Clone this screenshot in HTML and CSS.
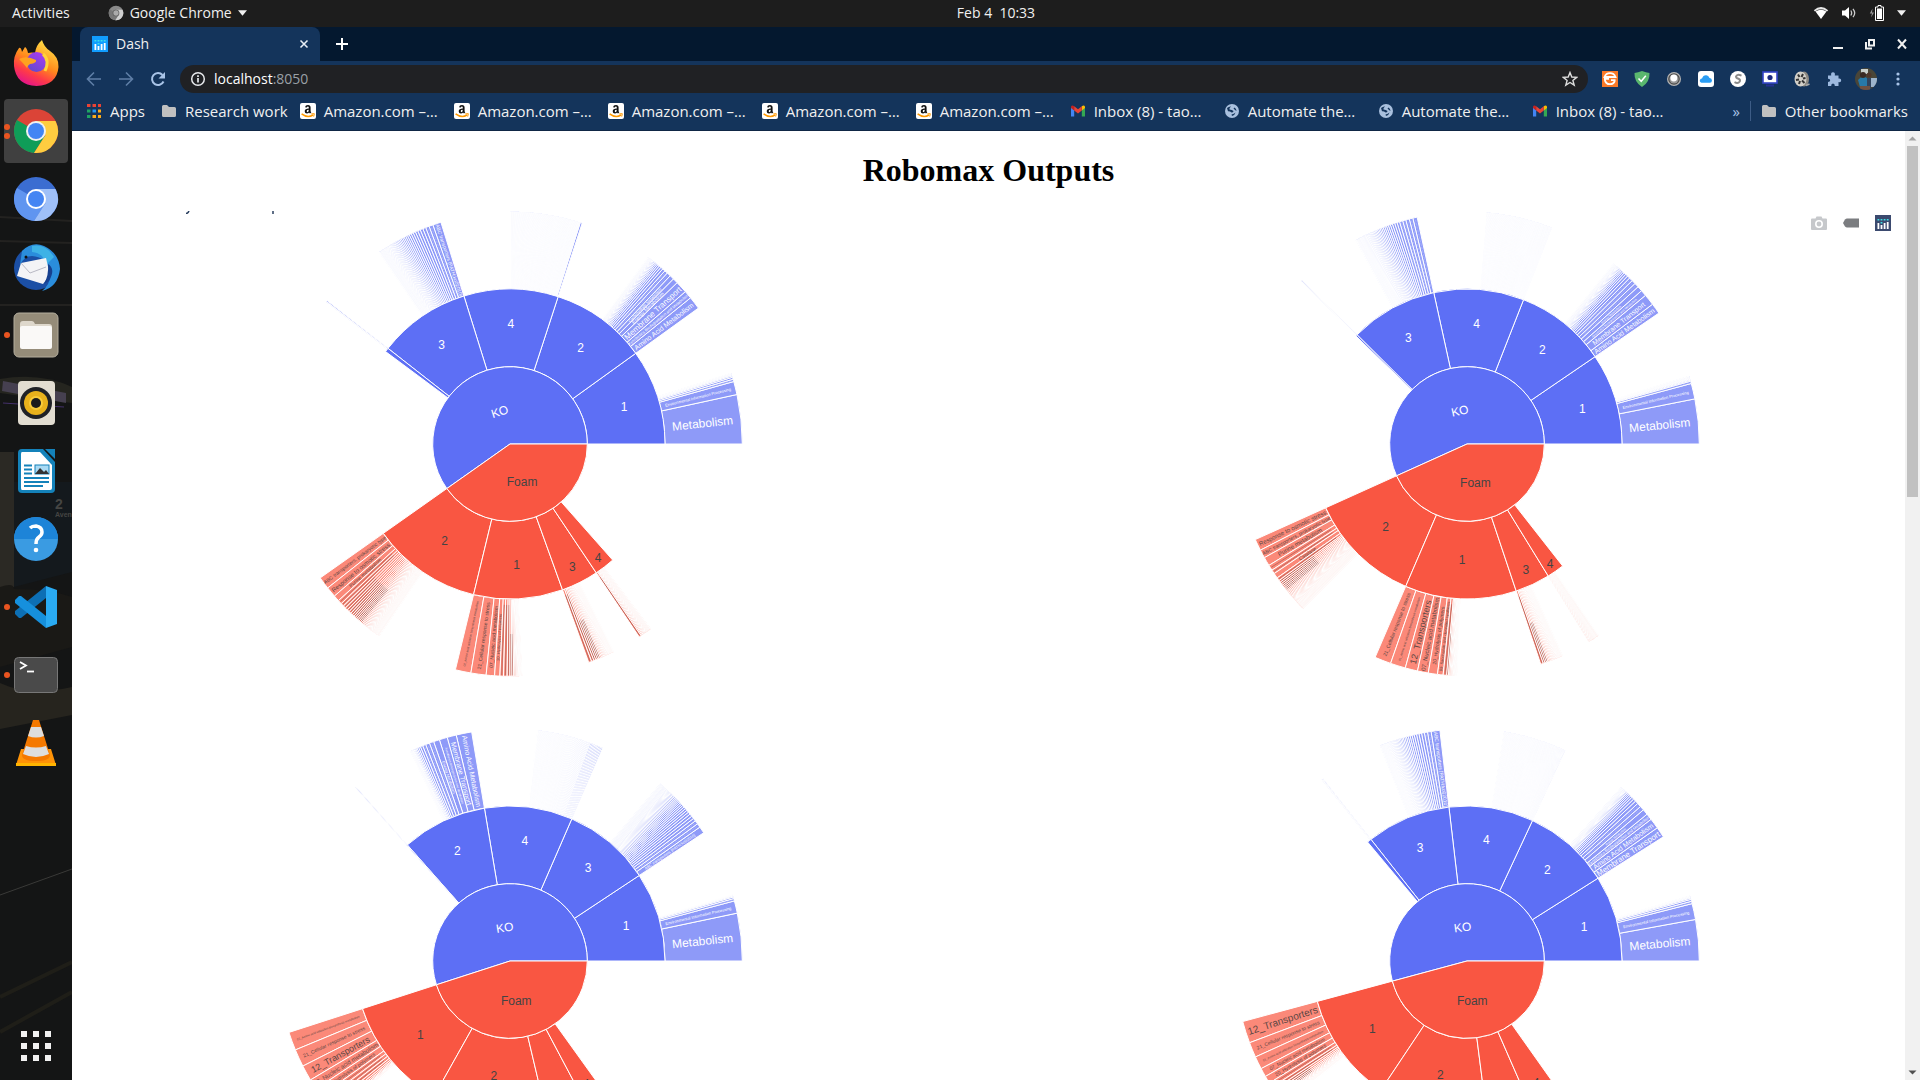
FILE: index.html
```html
<!DOCTYPE html>
<html lang="en">
<head>
<meta charset="utf-8">
<meta name="viewport" content="width=device-width, initial-scale=1">
<title>Dash</title>
<link rel="stylesheet" href="styles.css">
</head>
<body>
<svg class="sprite" aria-hidden="true">
  <symbol id="amazon" viewBox="0 0 16 16"><rect width="16" height="16" rx="2" fill="#fff"/><path d="M5 4.2Q5.4 1.9 8 1.9Q10.6 1.9 10.6 4.4V8Q10.6 8.8 11.3 9.4L10 10.6Q9.3 10 9.1 9.5Q8.2 10.6 6.9 10.6Q4.7 10.4 4.7 8.2Q4.8 5.5 8.8 5.4V4.5Q8.800 3.500 7.900 3.500Q7 3.500 6.800 4.400ZM8.800 6.800Q6.700 6.800 6.700 8.100Q6.700 9.200 7.500 9.200Q8.800 9.100 8.800 6.800Z" fill="#111"/><path d="M1.600 10.800Q7.500 15.300 13 12" fill="none" stroke="#f90" stroke-width="1.500"/><path d="M11.300 10.900L14.300 10.700L13.700 13.600" fill="none" stroke="#f90"/></symbol>
  <symbol id="gmail" viewBox="0 0 16 16"><path d="M1 4V13.500H4.200V7L1 4Z" fill="#4285f4"/><path d="M11.800 7V13.500H15V4Z" fill="#34a853"/><path d="M1 3.500Q2 1.800 4.200 3.200V7.400L1 5Z" fill="#c5221f"/><path d="M15 3.500Q14 1.800 11.800 3.200V7.400L15 5Z" fill="#fbbc04"/><path d="M4.200 3.200L8 6.200L11.800 3.200V7.400L8 10.400L4.200 7.400Z" fill="#ea4335"/></symbol>
  <symbol id="globe" viewBox="0 0 16 16"><circle cx="8" cy="8" r="7" fill="#a9c0de"/><path d="M3 5Q5.500 3 7 3.500Q5 5 5.500 6.500Q8 6.500 9.500 8Q9.500 9.500 7.500 9.500Q6 8 4 8.200ZM10.500 4.500Q12.500 5.500 12.500 8Q11 7 9.500 5.500ZM7.500 11.500Q10 11 11.500 9.500Q11 12 8 13Z" fill="#14345b"/></symbol>
  <symbol id="folder" viewBox="0 0 16 16"><path d="M1 3.500Q1 2 2.500 2H6L8 4H13.500Q15 4 15 5.500V12.500Q15 14 13.500 14H2.500Q1 14 1 12.500Z" fill="#c0c0c0"/></symbol>
  <symbol id="bars" viewBox="0 0 16 16"><path d="M2.500 8h1.800v6H2.500zM5.600 10h1.800v4H5.600zM8.700 8h1.800v6H8.700zM11.800 7h1.800v7h-1.800z" fill="#fff"/><path d="M2.500 4h1.800v1.500H2.500zM5.600 4h1.800v1.500H5.600zM8.700 4h1.800v1.500H8.700zM11.800 4h1.800v1.500h-1.800zM5.600 7h1.800v1.500H5.600z" fill="#3fe0e6"/></symbol>
  <symbol id="chrome" viewBox="0 0 48 48"><circle cx="24" cy="24" r="22" fill="var(--c1)"/><path d="M24 24L5 13A22 22 0 0 0 22 46L33 29Z" fill="var(--c2)"/><path d="M24 14H43.500A22 22 0 0 1 22 46L33.500 28Z" fill="var(--c3)"/><circle cx="24" cy="24" r="10" fill="var(--c4)"/><circle cx="24" cy="24" r="8" fill="var(--c5)"/></symbol>
</svg>

<header class="topbar">
  <div class="topbar-left">
    <button class="top-btn" type="button">Activities</button>
    <button class="top-btn app-menu" type="button"><svg class="ico16 chrome-grey"><use href="#chrome"/></svg>Google Chrome<svg class="caret" viewBox="0 0 10 6"><path d="M0 0H10L5 6Z"/></svg></button>
  </div>
  <button class="top-btn clock" type="button">Feb 4&nbsp; 10:33</button>
  <div class="topbar-right">
    <svg class="ico16" viewBox="0 0 16 16"><path d="M.8 5.200Q8 -1 15.200 5.200L14 6.600Q8 1.800 2 6.600Z" fill="#e8e8e8"/><path d="M2.500 6.500Q8 2.800 13.500 6.500L8 14Z" fill="#fff"/></svg>
    <svg class="ico16" viewBox="0 0 16 16"><path d="M1 5.500H4L8 2V14L4 10.500H1Z" fill="#fff"/><path d="M9.800 5.500Q11.500 8 9.800 10.500M12 3.800Q15.400 8 12 12.200" fill="none" stroke="#ccc" stroke-width="1.300"/></svg>
    <svg class="ico16" viewBox="0 0 16 16"><path d="M3.500 3.500L.8 8.500H3L2 12.500L5 7.500H3Z" fill="#999"/><path d="M9 .5h3V2h2.500V15.500H6.500V2H9Z" fill="none" stroke="#fff"/><rect x="8" y="3.500" width="5" height="10.500" fill="#fff"/></svg>
    <svg class="caret" viewBox="0 0 10 6"><path d="M0 0H10L5 6Z"/></svg>
  </div>
</header>

<div class="desktop">
  <nav class="dock" aria-label="Dock">
    <svg class="dock-bg" viewBox="0 0 72 1053" preserveAspectRatio="none" aria-hidden="true"><rect width="72" height="1053" fill="#141515"/><path d="M0 190L72 194M0 214L72 216M0 278H72" stroke="#232220" stroke-width="2"/><path d="M0 352Q40 345 72 360V376L0 366Z" fill="#25251f"/><path d="M3 354L66 366V376L2 364Z" fill="#464050"/><path d="M3 376L64 380" stroke="#43306a"/><path d="M0 425H14V560H0Z" fill="#2b2924"/><path d="M14 455H72V545L14 560Z" fill="#14191d"/><path d="M0 560Q14 555 14 562Q50 562 72 570V620L0 640Z" fill="#1a1916"/><path d="M0 656Q30 670 72 660V688L0 702Z" fill="#26241e"/><path d="M0 868L72 842" stroke="#3a3a38"/><path d="M0 970L72 935M0 1005L72 965" stroke="#1f1e18" stroke-width="4"/></svg>
    <span class="dock-sign">2<small>Aven</small></span>
    <button class="dock-item" type="button" aria-label="Firefox"><svg viewBox="0 0 48 48"><defs><linearGradient id="ff" x1=".8" y1="0" x2=".3" y2="1"><stop offset="0" stop-color="#ffe94a"/><stop offset=".5" stop-color="#ff8a1c"/><stop offset=".75" stop-color="#ff3b47"/><stop offset="1" stop-color="#e3128e"/></linearGradient><linearGradient id="fp" x1="0" y1="1" x2=".6" y2="0"><stop offset="0" stop-color="#5a4bc8"/><stop offset="1" stop-color="#a43cf0"/></linearGradient></defs><path d="M7 9Q9 8 10 13L13 8Q15 9 16 14Q20 13 23 14Q24 6 30 1Q32 8 38 12Q47 18 46.500 28Q45 46 24.500 47Q4 46 2 27Q1 17 7 9Z" fill="url(#ff)"/><circle cx="24.500" cy="23" r="10" fill="url(#fp)"/><path d="M7 20Q14 16 24 21Q25 24 18 25Q16 26 15 29Q12 25 7 20Z" fill="#ffa21f"/><path d="M31 15Q38 21 33 32" fill="none" stroke="#ffd238" stroke-width="3"/></svg></button>
    <button class="dock-item active two" type="button" aria-label="Google Chrome"><svg class="chrome-colour"><use href="#chrome"/></svg></button>
    <button class="dock-item" type="button" aria-label="Chromium"><svg class="chromium"><use href="#chrome"/></svg></button>
    <button class="dock-item" type="button" aria-label="Thunderbird"><svg viewBox="0 0 48 48"><circle cx="24" cy="25" r="22" fill="#1b4fa5"/><path d="M10 8Q20 -2 32 3Q47 10 48 26Q46 44 30 48Q42 38 36 26Q34 14 20 13Q12 13 8 22Z" fill="#2a8ddc"/><path d="M20 3Q34 0 42 14L34 22Q32 10 20 9Z" fill="#3eb2e6"/><path d="M9 20L34 15L38 32L31 41L5 33Z" fill="#f4f4f6"/><path d="M9 20L18 30L34 24" fill="none" stroke="#b9b9c4"/><path d="M36 21Q44 26 37 38L32 41Q37 32 36 21Z" fill="#16408f"/><circle cx="14" cy="14" r="1.500" fill="#111"/></svg></button>
    <button class="dock-item one" type="button" aria-label="Files"><svg viewBox="0 0 48 48"><rect x="2" y="2" width="44" height="44" rx="5" fill="#958c79" stroke="#b3ad9d"/><path d="M8 13Q8 10 11 10H20Q22 10 23 13H37Q40 13 40 16V34Q40 37 37 37H11Q8 37 8 34Z" fill="#ded8cc"/><rect x="8" y="15" width="32" height="23" rx="2" fill="#faf9f7"/></svg></button>
    <button class="dock-item" type="button" aria-label="Rhythmbox"><svg viewBox="0 0 48 48"><rect x="6" y="2" width="37" height="44" rx="4" fill="#e2ddd1"/><circle cx="24" cy="24" r="16" fill="#1f2126"/><circle cx="24" cy="24" r="12" fill="#e8b11c"/><circle cx="24" cy="24" r="7" fill="#f8cb3b"/><circle cx="24" cy="24" r="5" fill="#1c1c1c"/></svg></button>
    <button class="dock-item" type="button" aria-label="LibreOffice Writer"><svg viewBox="0 0 48 48"><path d="M10 2H31L43 15V42Q43 46 39 46H10Q6 46 6 42V6Q6 2 10 2Z" fill="#1482ba"/><path d="M33 2H43V12Z" fill="#1482ba"/><path d="M10 5H28L40 18V41Q40 43 38 43H10Q9 43 9 41V7Q9 5 10 5Z" fill="#fff"/><rect x="23" y="18" width="14" height="9" fill="#a9daf4" stroke="#1482ba"/><path d="M23 27L28 21L32 25L34 23L37 27Z" fill="#333"/><path d="M12 18.500H20M12 22.500H20M12 26.500H20M12 31H37M12 35H37M12 39H31" stroke="#1482ba" stroke-width="1.800"/></svg></button>
    <button class="dock-item" type="button" aria-label="Help"><svg viewBox="0 0 48 48"><circle cx="24" cy="24" r="22" fill="#3a9be2"/><path d="M2 24A22 22 0 0 1 46 24Z" fill="#1d84d8"/><path d="M18 13Q20 11 24 11Q30 12 30 17Q30 20 27 22Q24 24 24 29" fill="none" stroke="#fff" stroke-width="3.500"/><circle cx="24" cy="35" r="2.300" fill="#fff"/></svg></button>
    <button class="dock-item one" type="button" aria-label="Visual Studio Code"><svg viewBox="0 0 48 48"><path d="M34 3V15L9 35L7 35L3 31V28Z" fill="#0d6fb4"/><path d="M34 45V33L9 13H7L3 17V20Z" fill="#1690dd"/><path d="M34 3L45 7V41L34 45Z" fill="#2aabf3"/></svg></button>
    <button class="dock-item one" type="button" aria-label="Terminal"><svg viewBox="0 0 48 48"><rect x="2.500" y="6.500" width="43" height="35" rx="4" fill="#4a4a4a" stroke="#777"/><path d="M8 11L14 14.500L8 18" fill="none" stroke="#fff" stroke-width="1.800"/><path d="M15 20.500H22" stroke="#fff" stroke-width="1.800"/></svg></button>
    <button class="dock-item" type="button" aria-label="VLC"><svg viewBox="0 0 48 48"><path d="M9 30H39L44 46H4Z" fill="#ff9307"/><path d="M4 44H44V47H4Z" fill="#ffb400"/><path d="M21 1H27L38 36Q38 42 24 42Q10 42 10 36Z" fill="#f57900"/><path d="M19 8H29L32 17Q24 20 16 17ZM14 27Q24 30 34 27L37 35Q24 41 11 35Z" fill="#dedede"/></svg></button>
    <button class="dock-item apps-grid" type="button" aria-label="Show applications"><svg viewBox="0 0 48 48"><path d="M9 9h6v6H9zM21 9h6v6h-6zM33 9h6v6h-6zM9 21h6v6H9zM21 21h6v6h-6zM33 21h6v6h-6zM9 33h6v6H9zM21 33h6v6h-6zM33 33h6v6h-6z" fill="#f2f2f2"/></svg></button>
  </nav>

  <section class="browser">
    <div class="tabstrip">
      <div class="tab"><svg class="ico16 dash-icon"><use href="#bars"/></svg><span class="tab-title">Dash</span><button class="icon-btn tab-close" type="button" aria-label="Close tab"><svg viewBox="0 0 16 16"><path d="M4 4L12 12M12 4L4 12" stroke="#e8eef5" stroke-width="1.800"/></svg></button></div>
      <button class="icon-btn new-tab" type="button" aria-label="New tab"><svg viewBox="0 0 16 16"><path d="M8 2V14M2 8H14" stroke="#fff" stroke-width="2"/></svg></button>
      <div class="window-btns">
        <button class="icon-btn" type="button" aria-label="Minimize"><svg viewBox="0 0 16 16"><path d="M3 12H13" stroke="#f0f0f0" stroke-width="2"/></svg></button>
        <button class="icon-btn" type="button" aria-label="Restore"><svg viewBox="0 0 16 16"><path d="M7 4H12V9.500H7ZM4 6V12.500H10" fill="none" stroke="#f0f0f0" stroke-width="2"/></svg></button>
        <button class="icon-btn" type="button" aria-label="Close"><svg viewBox="0 0 16 16"><path d="M4 3.500L12 12.500M12 3.500L4 12.500" stroke="#f0f0f0" stroke-width="2"/></svg></button>
      </div>
    </div>

    <div class="toolbar">
      <button class="icon-btn" type="button" aria-label="Back"><svg viewBox="0 0 16 16"><path d="M15 8H2M8 1.500L1.500 8L8 14.500" fill="none" stroke="#5f7ea6" stroke-width="1.600"/></svg></button>
      <button class="icon-btn" type="button" aria-label="Forward"><svg viewBox="0 0 16 16"><path d="M1 8H14M8 1.500L14.500 8L8 14.500" fill="none" stroke="#5f7ea6" stroke-width="1.600"/></svg></button>
      <button class="icon-btn" type="button" aria-label="Reload"><svg viewBox="0 0 16 16"><path d="M13.500 10.500A6 6 0 1 1 12.500 4" fill="none" stroke="#a9c4e8" stroke-width="2"/><path d="M15 1V7.500H8.500Z" fill="#a9c4e8"/></svg></button>
      <div class="omnibox">
        <svg class="ico16" viewBox="0 0 16 16"><circle cx="8" cy="8" r="6.300" fill="none" stroke="#e8eaed" stroke-width="1.500"/><path d="M8 7V11.500M8 4.300V6" stroke="#e8eaed" stroke-width="1.700"/></svg>
        <span class="url" role="textbox" aria-label="Address" contenteditable="true" spellcheck="false">localhost<span class="port">:8050</span></span>
        <svg class="ico16" viewBox="0 0 16 16"><path d="M8 1.500L9.800 6L14.700 6.300L10.900 9.400L12.200 14.200L8 11.500L3.800 14.200L5.100 9.400L1.300 6.300L6.200 6Z" fill="none" stroke="#ddd" stroke-width="1.400"/></svg>
      </div>
      <div class="extensions">
        <button class="icon-btn" type="button" aria-label="G extension"><svg viewBox="0 0 16 16"><rect width="16" height="16" fill="#fb7a28"/><path d="M2.500 6Q4 2.200 8 2.200Q12 2.200 13.500 6ZM2 7.800H7M13.500 9.200H9M2.800 8.500Q3.500 13.200 8 13.200Q12 13.200 12.800 9.500" fill="none" stroke="#fff" stroke-width="1.800"/></svg></button>
        <button class="icon-btn" type="button" aria-label="AdGuard"><svg viewBox="0 0 16 16"><path d="M8 0Q12 1.500 15.500 2Q16 11 8 16Q0 11 .5 2Q4 1.500 8 0Z" fill="#5ab76e"/><path d="M4.500 7.500L7.200 10.300L11.800 4.800" fill="none" stroke="#fff" stroke-width="1.500"/></svg></button>
        <button class="icon-btn" type="button" aria-label="Lens extension"><svg viewBox="0 0 16 16"><circle cx="8" cy="8" r="7" fill="#b4b4b4"/><circle cx="8" cy="8" r="5.800" fill="#4a4a4a"/><circle cx="8" cy="8" r="4.600" fill="#999"/><circle cx="7.800" cy="7" r="3.400" fill="#fff"/></svg></button>
        <button class="icon-btn" type="button" aria-label="iCloud"><svg viewBox="0 0 16 16"><rect width="16" height="16" rx="3" fill="#fff"/><path d="M3.500 11.800Q1.200 11 2 8.800Q2.800 7.500 4 7.600Q5 4 8.300 4.200Q10.700 4.600 11.300 6.800Q14 7.200 14 9.500Q13.800 11.800 12 11.800Z" fill="#2a9df4"/></svg></button>
        <button class="icon-btn" type="button" aria-label="S extension"><svg viewBox="0 0 16 16"><circle cx="8" cy="8" r="8" fill="#fff"/><path d="M11.500 4.700Q7 2.700 6 5.500Q6 7 8.500 7.800Q10.500 8.500 9.800 10.500Q8 13 4.500 11.200" fill="none" stroke="#8b8b8b" stroke-width="2"/></svg></button>
        <button class="icon-btn" type="button" aria-label="Screen recorder"><svg viewBox="0 0 16 16"><rect x="1" y="1" width="14" height="11" fill="#fff" stroke="#3545c8" stroke-width="1.600"/><circle cx="8" cy="6.500" r="2.600" fill="#1c2a80"/><path d="M4 14.500H12" stroke="#252f94" stroke-width="2"/></svg></button>
        <button class="icon-btn" type="button" aria-label="Video extension"><svg viewBox="0 0 16 16"><ellipse cx="10" cy="8" rx="5" ry="7.500" fill="#8c8881"/><ellipse cx="6.500" cy="8" rx="6" ry="7.500" fill="#d2cfc8"/><path d="M4 3.500L5.500 6M9 3L7.500 6M2 9L5 8.500M5 13L6 10M10.500 12L8 9.500M11.500 7L9 7.500" stroke="#333" stroke-width="2"/><path d="M12 14.500L15.500 13" stroke="#aaa" stroke-width="1.500"/></svg></button>
        <button class="icon-btn" type="button" aria-label="Extensions"><svg viewBox="0 0 16 16"><path d="M2 4.500H5.200Q4.600 1.200 7 1.200Q9.400 1.200 8.800 4.500H12.500V7.500Q15.200 7 15.200 9.300Q15.200 11.700 12.500 11.100V15H8.800Q9 12.500 7 12.500Q5 12.500 5.200 15H2V11Q4.300 11 4.200 9.300Q4.300 7.600 2 7.700Z" fill="#9db9df"/></svg></button>
        <button class="icon-btn avatar" type="button" aria-label="Profile"><svg viewBox="0 0 22 22"><defs><clipPath id="av"><circle cx="11" cy="11" r="11"/></clipPath></defs><g clip-path="url(#av)"><rect width="22" height="22" fill="#4a4638"/><rect x="6" y="1" width="7" height="5" fill="#c9cfcb"/><rect x="15" y="10" width="7" height="9" fill="#9db4cc"/><path d="M3 12Q8 6 13 11V19H5Z" fill="#2779a8"/><circle cx="8" cy="7" r="3" fill="#3a2a24"/><circle cx="14" cy="7" r="2.500" fill="#50372b"/><path d="M12 10H16V22H12Z" fill="#31445e"/><path d="M5 18H15V22H5Z" fill="#6e5142"/></g></svg></button>
        <button class="icon-btn" type="button" aria-label="Menu"><svg viewBox="0 0 16 16"><circle cx="8" cy="3" r="1.600" fill="#a9c4e8"/><circle cx="8" cy="8" r="1.600" fill="#a9c4e8"/><circle cx="8" cy="13" r="1.600" fill="#a9c4e8"/></svg></button>
      </div>
    </div>

    <nav class="bookmarks" aria-label="Bookmarks">
      <a class="bm apps" href="#"><svg class="ico16" viewBox="0 0 16 16"><path d="M1 1h3.500v3H1zM6.500 1H10v3H6.500zM12 1h3v3h-3z" fill="#ea4335"/><path d="M1 6.500h3.500v3H1z" fill="#1fa463"/><path d="M6.500 6.500H10v3H6.500z" fill="#2196f3"/><path d="M12 6.500h3v3h-3zM6.500 12H10v3H6.500zM12 12h3v3h-3z" fill="#fbab1a"/><path d="M1 12h3.500v3H1z" fill="#1fa463"/></svg>Apps</a>
      <a class="bm research" href="#"><svg class="ico16"><use href="#folder"/></svg>Research work</a>
      <a class="bm site" href="#"><svg class="ico16"><use href="#amazon"/></svg>Amazon.com –…</a>
      <a class="bm site" href="#"><svg class="ico16"><use href="#amazon"/></svg>Amazon.com –…</a>
      <a class="bm site" href="#"><svg class="ico16"><use href="#amazon"/></svg>Amazon.com –…</a>
      <a class="bm site" href="#"><svg class="ico16"><use href="#amazon"/></svg>Amazon.com –…</a>
      <a class="bm site" href="#"><svg class="ico16"><use href="#amazon"/></svg>Amazon.com –…</a>
      <a class="bm site" href="#"><svg class="ico16"><use href="#gmail"/></svg>Inbox (8) - tao…</a>
      <a class="bm site" href="#"><svg class="ico16"><use href="#globe"/></svg>Automate the…</a>
      <a class="bm site" href="#"><svg class="ico16"><use href="#globe"/></svg>Automate the…</a>
      <a class="bm site" href="#"><svg class="ico16"><use href="#gmail"/></svg>Inbox (8) - tao…</a>
      <div class="bm-end">
        <button class="more" type="button" aria-label="More bookmarks">»</button>
        <a class="bm other" href="#"><svg class="ico16"><use href="#folder"/></svg>Other bookmarks</a>
      </div>
    </nav>

    <div class="viewport">
      <main class="page">
        <h1>Robomax Outputs</h1>
        <div class="graph">
          <svg class="title-edge" viewBox="0 0 90 3" aria-hidden="true"><path d="M1 2.500Q3 2.500 4 0M88 0V3" fill="none" stroke="#2a3f5f" stroke-width="1.500"/></svg>
          <div class="charts" id="charts"></div>
          <div class="modebar">
            <button class="icon-btn" type="button" aria-label="Download plot as a png"><svg viewBox="0 0 16 16"><path d="M1 3.500H4.500L5.500 1.500H10.500L11.500 3.500H15Q16 3.500 16 4.500V14Q16 15 15 15H1Q0 15 0 14V4.500Q0 3.500 1 3.500Z" fill="#c6c8cb"/><circle cx="8" cy="9" r="3.200" fill="none" stroke="#fff" stroke-width="1.600"/></svg></button>
            <button class="icon-btn" type="button" aria-label="Toggle hover labels"><svg viewBox="0 0 16 16"><path d="M0 8L2 4.500Q3 3.500 4 3.500H16V12.500H4Q3 12.500 2 11.500Z" fill="#7b7d80"/></svg></button>
            <button class="icon-btn plotly" type="button" aria-label="Produced with Plotly"><svg><use href="#bars"/></svg></button>
          </div>
        </div>
      </main>
      <div class="scrollbar" aria-hidden="true"><svg viewBox="0 0 15 15"><path d="M3.500 9.500H11.500L7.500 5.500Z" fill="#a3a3a3"/></svg><div class="thumb"></div><svg viewBox="0 0 15 15"><path d="M3.500 5.500H11.500L7.500 9.500Z" fill="#505050"/></svg></div>
    </div>
  </section>
</div>
<script src="charts.js"></script>
</body>
</html>
```

FILE: styles.css
```css
* { box-sizing: border-box; }

body {
  margin: 0;
  height: 100vh;
  display: flex;
  flex-direction: column;
  overflow: hidden;
  background: #141515;
  font-family: "Open Sans", "Noto Sans", sans-serif;
  font-size: 14px;
  color: #f0f0f0;
}

button {
  padding: 0;
  border: 0;
  background: none;
  color: inherit;
  font: inherit;
}

a { color: inherit; text-decoration: none; }
svg { display: block; flex: none; }
.sprite { position: absolute; width: 0; height: 0; }
.ico16 { width: 16px; height: 16px; }
.caret { width: 9px; height: 6px; fill: #f0f0f0; }

/* GNOME top bar; the clock is centred over the area beside the dock */
.topbar {
  flex: none;
  height: 27px;
  display: grid;
  grid-template-columns: 74px 1fr auto 1fr;
  align-items: center;
  padding: 0 14px 2px 12px;
  background: #1d1d1d;
}
.topbar-left { grid-column: 1 / 3; display: flex; gap: 38px; }
.topbar-right { display: flex; justify-content: flex-end; align-items: center; gap: 12px; }
.app-menu { display: flex; align-items: center; gap: 6px; }
.chrome-grey { --c1: #8a8a8a; --c2: #777; --c3: #d0d0d0; --c4: #555; --c5: #aaa; }

.desktop { flex: 1; min-height: 0; display: flex; }

/* Dock */
.dock {
  position: relative;
  flex: none;
  width: 72px;
  padding: 4px 4px 2px;
  display: flex;
  flex-direction: column;
  gap: 4px;
}
.dock-bg { position: absolute; inset: 0; width: 100%; height: 100%; }
.dock-sign {
  position: absolute;
  left: 55px;
  top: 470px;
  width: 17px;
  overflow: hidden;
  color: #454543;
  font: bold 14px/14px "Liberation Sans", sans-serif;
}
.dock-sign small { display: block; font-size: 7px; line-height: 8px; }
.dock-item {
  position: relative;
  flex: none;
  width: 64px;
  height: 64px;
  display: grid;
  place-items: center;
  border-radius: 4px;
}
.dock-item svg { width: 48px; height: 48px; }
.dock-item.active { background: #404040; }
.dock-item.one::before,
.dock-item.two::before,
.dock-item.two::after {
  content: "";
  position: absolute;
  left: 0;
  top: 29px;
  width: 6px;
  height: 6px;
  border-radius: 50%;
  background: #e95420;
}
.dock-item.two::before { top: 25px; }
.dock-item.two::after { top: 34px; }
.chrome-colour { --c1: #db4437; --c2: #0f9d58; --c3: #ffcd40; --c4: #f1f1f1; --c5: #4285f4; }
.chromium { --c1: #3b6dd1; --c2: #6095f0; --c3: #9fc0f8; --c4: #fff; --c5: #4585f3; }
.apps-grid { margin-top: auto; }

/* Browser chrome */
.browser { flex: 1; min-width: 0; display: flex; flex-direction: column; background: #14345b; }
.icon-btn { flex: none; width: 32px; height: 32px; display: grid; place-items: center; }
.icon-btn svg { width: 16px; height: 16px; }

.tabstrip {
  flex: none;
  height: 34px;
  display: flex;
  align-items: center;
  padding: 0 2px 0 8px;
  background: #04182f;
}
.tab {
  width: 240px;
  height: 34px;
  display: flex;
  align-items: center;
  gap: 8px;
  padding-left: 12px;
  border-radius: 8px 8px 0 0;
  background: #14345b;
}
.tab-title { flex: 1; padding-bottom: 2px; }
.dash-icon { background: #119dff; }
.tab-close svg { width: 14px; height: 14px; }
.new-tab { margin-left: 6px; }
.window-btns { margin-left: auto; display: flex; }

.toolbar { flex: none; height: 36px; display: flex; align-items: center; padding: 0 6px; }
.omnibox {
  flex: 1;
  min-width: 0;
  height: 28px;
  margin: 0 6px;
  display: flex;
  align-items: center;
  gap: 8px;
  padding: 0 10px;
  border-radius: 14px;
  background: #202124;
}
.url { flex: 1; padding-bottom: 2px; color: #fff; outline: none; }
.port { color: #9aa0a6; }
.extensions { display: flex; }
.avatar svg { width: 22px; height: 22px; }

.bookmarks {
  flex: none;
  height: 34px;
  display: flex;
  align-items: center;
  padding: 0 12px 6px 14px;
  border-bottom: 1px solid #0f2745;
  font-size: 15px;
  white-space: nowrap;
}
.bm { display: flex; align-items: center; gap: 8px; margin-right: 16px; }
.bm.research { margin-right: 12px; }
.bm.site { flex: none; width: 154px; margin-right: 0; }
.bm.other { margin: 0; padding-left: 10px; border-left: 1px solid #3d5c86; }
.bm-end { margin-left: auto; display: flex; gap: 10px; }
.more { color: #a9c4e8; }

/* Dash page */
.viewport { flex: 1; min-height: 0; display: flex; background: #fff; }
.page {
  flex: 1;
  min-width: 0;
  height: 100%;
  padding: 0 8px;
  overflow: hidden;
  color: #000;
}
h1 {
  margin: 21px 0 22px;
  font: bold 32px/37px "Liberation Serif", serif;
  text-align: center;
}
.graph { position: relative; }
.title-edge { position: absolute; left: 105px; top: 0; width: 90px; height: 3px; }
.modebar { position: absolute; right: -2px; top: -4px; display: flex; }
.plotly svg { background: #3b4a6f; }
.charts {
  display: grid;
  grid-template-columns: 1fr 1fr;
  column-gap: 10%;
  row-gap: 51px;
  padding: 0 39px;
  justify-items: center;
}
.sunburst {
  width: 480px;
  height: 466px;
  overflow: visible;
  font-family: "Liberation Sans", sans-serif;
  font-size: 12px;
  text-anchor: middle;
  fill: #444;
}
.slice { stroke: #fff; stroke-width: 1px; }
.slice.ko { fill: #5d6ff5; }
.slice.foam { fill: #f95642; }
.slice.leaf.ko { fill: #8e9af8; }
.slice.leaf.foam { fill: #fb8979; }
text.ko { fill: #fff; }
.leaf-text.foam { fill: #5c4744; }
.fine { stroke-opacity: .4; }
.fine.ko { stroke: #c9cffc; stroke-dasharray: 3 1 2 1; }
.fine.foam { stroke: #6e3a34; }

.scrollbar {
  flex: none;
  width: 15px;
  display: flex;
  flex-direction: column;
  align-items: center;
  background: #f1f1f1;
}
.scrollbar svg { width: 15px; height: 15px; }
.thumb { width: 11px; flex: 0 0 37%; margin-bottom: auto; background: #c1c1c1; }
```

FILE: charts.js
```js
// Angles are degrees, counter-clockwise from east.
// leaves: [end angle, label, font size]; tail: [end angle, first width].
const ENV = 'Environmental Information Processing';
const AMINO = 'Amino Acid Metabolism';
const MEMBRANE = 'Membrane Transport';
const XENO = 'Xenobiotics Biodegradation and Metabolism';
const STRESS = '21_Cellular response to stress';
const AMINO_UTIL = '01_Amino acid utilization biosynthesis metabolism';
const NUCLEIC = '07_Nucleic acid metabolism';
const POLYMERS = '20_Hydrolysis of polymers';
const ABC = 'ABC transporters, prokaryotic type';
const OSMOTIC = 'Response to osmotic stress';

const charts = [
  { split: 215.2, ko: [
      { end: 35.8, label: '1', leaves: [[12.3, 'Metabolism', 12], [15.6, ENV, 4], [16.2]], tail: [17.8, 0.5] },
      { end: 71.9, label: '2', leaves: [[39, AMINO, 7], [41, XENO, 4], [44, MEMBRANE, 8], [45.3, 'Energy Metabolism', 5], [46.4, 'Carbohydrate Metabolism', 4], [47.4], [48.2]], tail: [53.5, 0.7] },
      { end: 107.3, label: '4', leaves: [[72.4]], tail: [90, 0.1] },
      { end: 141.9, label: '3', leaves: [[109.4, 'ABC transporters [PATH:ko02010]', 5], [110.4], [111.3]], tail: [124.3, 0.75] },
      { end: 143.4, label: '', leaves: [], tail: [142.3, 0.3] } ],
    foam: [
      { end: 256.4, label: '2', leaves: [[218.3, ABC, 5], [220.9, OSMOTIC, 6], [222.4, 'Purine metabolism', 5], [223.4], [224.2]], tail: [235.7, 0.7] },
      { end: 289.8, label: '1', leaves: [[260.3, AMINO_UTIL, 3], [264.1, STRESS, 5], [266.2, NUCLEIC, 5], [267.5, POLYMERS, 4], [268.4], [269.3], [270]], tail: [273, 0.5] },
      { end: 303.8, label: '3', leaves: [[290.6], [291.2]], tail: [296.5, 0.5] },
      { end: 311.5, label: '4', leaves: [[304.4]], tail: [307.3, 0.3] } ] },
  { split: 204.3, ko: [
      { end: 34.3, label: '1', leaves: [[11.2, 'Metabolism', 12], [15.1, ENV, 4], [15.7]], tail: [17, 0.25] },
      { end: 68.6, label: '2', leaves: [[37, AMINO, 7], [39.8, MEMBRANE, 7], [41.3, XENO, 3], [42.6, 'Energy Metabolism', 3], [43.7], [44.7], [45.6]], tail: [50.9, 0.7] },
      { end: 102.4, label: '4', leaves: [], tail: [85.3, 0.1] },
      { end: 135.2, label: '3', leaves: [[103.5], [104.4], [105.3], [106.1], [106.9]], tail: [118.6, 0.65] },
      { end: 135.8, label: '', leaves: [], tail: [135.5, 0.25] } ],
    foam: [
      { end: 246.7, label: '2', leaves: [[207.2, OSMOTIC, 6], [209.3, ABC, 5], [211.5, 'Purine metabolism', 6], [212.9], [213.9], [215.2, 'Catalase', 5], [216]], tail: [225.1, 0.5] },
      { end: 288.5, label: '1', leaves: [[250.8, STRESS, 5], [254.6, AMINO_UTIL, 3], [257.7, '12_Transporters', 9], [260.4, NUCLEIC, 6], [262.7, POLYMERS, 5], [264.1, '09_Saccharide and derivated synthesis', 4], [265]], tail: [267.5, 0.4] },
      { end: 301.6, label: '3', leaves: [[289.2]], tail: [294.3, 0.45] },
      { end: 308.1, label: '4', leaves: [], tail: [304.5, 0.2] } ] },
  { split: 197.9, ko: [
      { end: 33.5, label: '1', leaves: [[11.9, 'Metabolism', 12], [15, ENV, 4], [15.6]], tail: [16.6, 0.4] },
      { end: 66.5, label: '3', leaves: [[35.2, 'ABC transporters [PATH:ko02010]', 4], [36.2], [37.1]], tail: [49.7, 0.75] },
      { end: 99.5, label: '4', leaves: [[66.8], [67.1], [67.4], [67.7], [68], [68.3], [68.6], [68.9], [69.2], [69.5], [69.8]], tail: [83.2, 0.2] },
      { end: 131.5, label: '2', leaves: [[103.4, AMINO, 7], [105.7, MEMBRANE, 7], [107.7, XENO, 3], [109.2, 'Energy Metabolism', 4], [110.3], [111.3], [112.1]], tail: [115.4, 0.6] },
      { end: 131.8, label: '', leaves: [], tail: [131.7, 0.2] } ],
    foam: [
      { end: 240.7, label: '1', leaves: [[202.5, AMINO_UTIL, 3], [206.9, STRESS, 5], [210.8, '12_Transporters', 9], [213.4, NUCLEIC, 6], [215.5, POLYMERS, 5], [216.8], [217.9], [218.9]], tail: [222, 0.7] },
      { end: 283.3, label: '2', leaves: [], tail: null },
      { end: 297.9, label: '3', leaves: [], tail: null },
      { end: 305.7, label: '4', leaves: [], tail: null } ] },
  { split: 195.1, ko: [
      { end: 32.3, label: '1', leaves: [[10.3, 'Metabolism', 12], [14.3, ENV, 4], [14.9]], tail: [16.3, 0.5] },
      { end: 65, label: '2', leaves: [[35, MEMBRANE, 8], [37.6, AMINO, 7], [39.2, XENO, 4], [40.6, 'Energy Metabolism', 3], [41.7], [42.7]], tail: [48.4, 0.8] },
      { end: 96.7, label: '4', leaves: [[65.2]], tail: [80.8, 0.12] },
      { end: 128.3, label: '3', leaves: [[98.9, 'ABC transporters [PATH:ko02010]', 5], [99.8], [100.6]], tail: [112, 0.7] },
      { end: 129.9, label: '', leaves: [], tail: [128.7, 0.2] } ],
    foam: [
      { end: 236.3, label: '1', leaves: [[200.6, '12_Transporters', 10], [204.4, STRESS, 5], [207.6, AMINO_UTIL, 3], [209.8, NUCLEIC, 5], [211.7, POLYMERS, 5], [212.9], [213.7]], tail: [218, 0.6] },
      { end: 277.3, label: '2', leaves: [], tail: null },
      { end: 293.6, label: '3', leaves: [], tail: null },
      { end: 305.3, label: '4', leaves: [], tail: null } ] }
];

const R1 = 77.3, R2 = 155, R3 = 232.3;
const pt = (r, a) => {
  const t = a * Math.PI / 180;
  return (r * Math.cos(t)).toFixed(2) + ' ' + (-r * Math.sin(t)).toFixed(2);
};

function slice(r0, r1, a0, a1, cls) {
  const big = a1 - a0 > 180 ? 1 : 0;
  const inner = r0 ? `L${pt(r0, a1)}A${r0} ${r0} 0 ${big} 1 ${pt(r0, a0)}` : 'L0 0';
  return `<path class="slice ${cls}" d="M${pt(r1, a0)}A${r1} ${r1} 0 ${big} 0 ${pt(r1, a1)}${inner}Z"/>`;
}

function label(r, a, str, cls, rot, size) {
  const fs = size ? ` font-size="${size}"` : '';
  return `<text class="${cls}" transform="translate(${pt(r, a)}) rotate(${rot})" dy=".35em"${fs}>${str}</text>`;
}

function leafSlices(node, start, cls) {
  let out = '', a = start;
  for (const [end, str, size] of node.leaves) {
    const mid = (a + end) / 2;
    out += slice(R2, R3, a, end, 'leaf ' + cls);
    if (str) {
      const rot = mid > 90 && mid < 270 ? 180 - mid : -mid;
      out += label((R2 + R3) / 2, mid, str, 'leaf-text ' + cls, rot, size);
    } else if (end - a > 0.5) {
      out += `<path class="fine ${cls}" d="M${pt(R2 + 6, mid)}L${pt(R3 - 1, mid)}"/>`;
    }
    a = end;
  }
  if (node.tail) {
    const [end, first] = node.tail;
    const q = 1 - first / Math.max(end - a, first);
    let w = first;
    while (a < end) {
      out += slice(R2, R3, a, Math.min(a + w, end), 'leaf ' + cls);
      if (cls === 'foam' && w > 0.35) {
        out += `<path class="fine foam" d="M${pt(R2 + 35, a + w / 2)}L${pt(R3 - 1, a + w / 2)}"/>`;
      }
      a += w;
      w = Math.max(w * q, 0.1);
    }
  }
  return out;
}

// Narrow sectors push their label outwards, where there is room for it.
function labelRadius(width) {
  return width < 20 ? 152 - width : Math.max(116, 142 - 0.62 * width);
}

function sunburst(chart) {
  let out = '';
  for (const [cls, from] of [['ko', 0], ['foam', chart.split]]) {
    let a = from;
    for (const node of chart[cls]) {
      out += leafSlices(node, a, cls);
      out += slice(R1, R2, a, node.end, cls);
      if (node.label) {
        out += label(labelRadius(node.end - a), (a + node.end) / 2, node.label, cls, 0);
      }
      a = node.end;
    }
  }
  out += slice(0, R1, 0, chart.split, 'ko') + slice(0, R1, chart.split, 360, 'foam');
  out += label(34, chart.split / 2, 'KO', 'ko', 90 - chart.split / 2);
  out += label(40, (chart.split + 360) / 2, 'Foam', 'foam', 0);
  return `<svg class="sunburst" viewBox="-240 -233 480 466" role="img">${out}</svg>`;
}

document.getElementById('charts').innerHTML = charts.map(sunburst).join('');
```
